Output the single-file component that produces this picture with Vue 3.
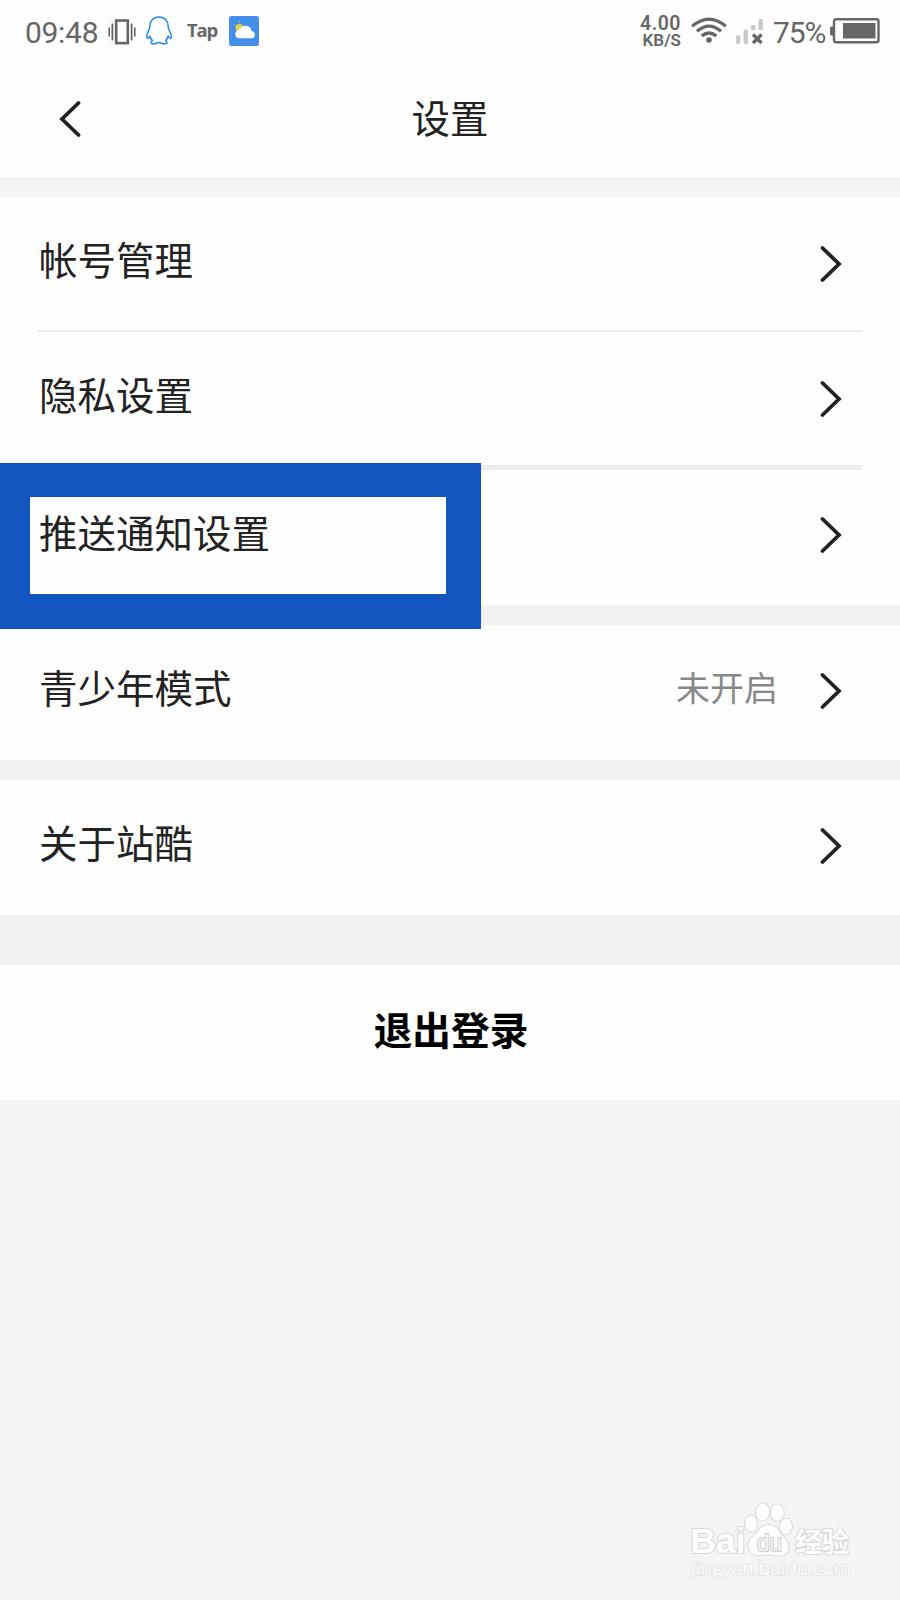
<script setup>
const groups = [
  [
    { label: '帐号管理', size: 'first' },
    { label: '隐私设置', size: 'second' },
    { label: '推送通知设置', size: 'third', marked: true },
  ],
  [{ label: '青少年模式', value: '未开启' }],
  [{ label: '关于站酷' }],
]
</script>

<template>
  <div class="screen">
    <div class="status">
      <span class="time">09:48</span>
      <svg class="vibrate" width="28" height="26" viewBox="0 0 28 26" fill="none" stroke="#666">
        <rect x="8.2" y="1.5" width="11.6" height="22.6" stroke-width="2.6" />
        <path d="M4.4 4.5v17M23.6 4.5v17" stroke-width="1.8" />
        <path d="M1.2 8.5v9M26.8 8.5v9" stroke-width="1.6" />
      </svg>
      <svg class="qq" width="26" height="29" viewBox="0 0 26 29" fill="none" stroke="#2488e6" stroke-width="1.5" stroke-linejoin="round">
        <path d="M13 1C7 1 3.800 5.300 3.800 10.200C3.800 13 2.500 14.500 1.500 17.200C.6 19.700.7 22 1.500 22.400C2.300 22.700 3.300 20.800 3.900 20C4.300 22 5.200 23.500 6.500 24.600C4.500 25.500 4.200 27.700 6.800 27.800C9 28 11 27.600 12 26.600H14C15 27.600 17 28 19.200 27.800C21.800 27.700 21.500 25.500 19.500 24.600C20.800 23.500 21.700 22 22.100 20C22.700 20.800 23.700 22.700 24.500 22.400C25.300 22 25.400 19.700 24.500 17.200C23.500 14.500 22.200 13 22.200 10.200C22.200 5.300 19 1 13 1Z" />
      </svg>
      <span class="tap">Tap</span>
      <svg class="weather" width="30" height="30" viewBox="0 0 30 30">
        <rect width="30" height="30" rx="2.500" fill="#438ee8" />
        <circle cx="10.500" cy="12" r="4" fill="#e5d24a" />
        <path d="M5 8.500l1.500 1M10.500 4.700v1.600" stroke="#b9c66c" stroke-width="1" />
        <path d="M10 22.200a4 4 0 0 1-.6-7.900a3.700 3.700 0 0 1 3-2.300a5.600 5.600 0 0 1 10 3.100a3.600 3.600 0 0 1 .6 7.100Z" fill="#fff" />
      </svg>
      <span class="spacer"></span>
      <span class="speed"><span>4.00</span><span class="unit">KB/S</span></span>
      <svg class="wifi" width="36" height="27" viewBox="0 0 36 27" fill="none" stroke="#666" stroke-width="3.300">
        <path d="M1.200 9.300Q18-5.100 34.800 9.300M5.900 14.300Q18 3.900 30.100 14.300M10.700 19Q18 13 25.300 19" />
        <circle cx="18" cy="23" r="2.800" fill="#666" stroke="none" />
      </svg>
      <svg class="signal" width="28" height="27" viewBox="0 0 28 27">
        <g fill="#c9c9c9">
          <rect x="0" y="17" width="4.400" height="9" rx="1.800" />
          <rect x="7.500" y="11.500" width="4.400" height="14.500" rx="1.500" />
          <rect x="15" y="7" width="4.400" height="5" rx="1.500" />
          <rect x="22.500" y="1" width="4.400" height="11" rx="1.500" />
        </g>
        <path d="M17 16.500l8.500 8.500M25.500 16.500l-8.500 8.500" stroke="#666" stroke-width="3.300" />
      </svg>
      <span class="percent">75%</span>
      <svg class="battery" width="50" height="26" viewBox="0 0 50 26">
        <rect x="0" y="8.500" width="4" height="9" rx="1.500" fill="#666" />
        <rect x="4" y="1.300" width="44.500" height="23" rx="2" fill="none" stroke="#666" stroke-width="2.400" />
        <rect x="13" y="5" width="32.500" height="15.500" fill="#666" />
      </svg>
    </div>

    <div class="header">
      <svg class="back" width="22" height="38" viewBox="0 0 22 38">
        <path d="M19.500 3L3 19L19.500 35" fill="none" stroke="#222" stroke-width="3.800" stroke-linecap="round" />
      </svg>
      <h1>设置</h1>
    </div>

    <section v-for="(group, i) in groups" :key="i" class="group">
      <div v-for="row in group" :key="row.label" class="row" :class="row.size">
        <div v-if="row.marked" class="marker"></div>
        <span class="label">{{ row.label }}</span>
        <span v-if="row.value" class="value">{{ row.value }}</span>
        <svg class="chevron" width="22" height="38" viewBox="0 0 22 38">
          <path d="M2.500 3L19 19L2.500 35" fill="none" stroke="#222" stroke-width="3.800" stroke-linecap="round" />
        </svg>
      </div>
    </section>

    <button class="logout">退出登录</button>

    <div class="rest">
      <svg class="watermark" width="170" height="84" viewBox="0 0 170 84">
        <g fill="#fdfdfd" stroke="#d9d9d9" stroke-width="2" paint-order="stroke">
          <text x="4.500" y="55" font-size="35.500" font-weight="700" textLength="55">Bai</text>
          <text x="109" y="53.500" font-size="27" font-weight="700" class="cjk" textLength="54">经验</text>
          <ellipse cx="65" cy="25.500" rx="6" ry="8" />
          <ellipse cx="76.700" cy="14" rx="6.500" ry="8.700" />
          <ellipse cx="91.300" cy="14.700" rx="6.500" ry="8.300" />
          <ellipse cx="100" cy="28.500" rx="6" ry="7.700" />
          <path d="M82.500 27C74 27 73 34 67 39C60 44 61 55 70 57C75 58 78 56 83 56.500C88 57 91 58.500 97 57C104 55 104 46 99 41C93 35 92 27 82.500 27Z" />
          <text x="71" y="53" font-size="24" textLength="25" lengthAdjust="spacingAndGlyphs" fill="#f1f1f1" stroke="#cfcfcf">du</text>
          <text x="5" y="77" font-size="19" textLength="160" stroke="#e2e2e2" stroke-width="1.600" class="url">jingyan.baidu.com</text>
        </g>
      </svg>
    </div>
  </div>
</template>

<style>
body {
  margin: 0;
  background: #f4f4f4;
}
</style>

<style scoped>
.screen {
  width: 900px;
  height: 1600px;
  display: flex;
  flex-direction: column;
  overflow: hidden;
  background: #f4f4f4;
  color: #222;
  font-family: "Noto Sans CJK SC", sans-serif;
}
.status {
  flex: none;
  height: 66px;
  box-sizing: border-box;
  padding: 0 20px 0 25px;
  display: flex;
  align-items: center;
  background: #fefefe;
  color: #666;
  font-family: Roboto, sans-serif;
}
.time,
.percent {
  font-size: 30px;
  font-weight: 400;
  line-height: 36px;
}
.time {
  width: 83px;
  letter-spacing: -0.3px;
  white-space: nowrap;
}
.vibrate { margin-top: -3px; }
.qq { margin: -5px 0 0 10px; }
.tap {
  width: 38px;
  margin: -7px 0 0 15px;
  font: 700 18.5px/24px "Open Sans", sans-serif;
  letter-spacing: -1.2px;
}
.weather { margin: -5px 0 0 4px; }
.spacer { flex: 1; }
.speed {
  display: flex;
  flex-direction: column;
  align-items: flex-end;
  margin: -3px 10px 0 0;
  font-size: 19.5px;
  font-weight: 600;
  line-height: 17px;
  letter-spacing: 0.5px;
}
.unit {
  font-size: 17px;
  letter-spacing: 0;
}
.wifi { margin: -5px 9px 0 0; }
.signal { margin: -3px 9px 0 0; }
.percent {
  width: 57px;
  letter-spacing: -1.1px;
}
.battery { margin-top: -4px; }
.header {
  flex: none;
  height: 111px;
  display: grid;
  grid-template-columns: 100px 1fr 100px;
  align-items: start;
  background: #fefefe;
}
.back { margin: 34px 0 0 59px; }
h1 {
  margin: 22px 0 0;
  text-align: center;
  font-size: 38.5px;
  font-weight: 400;
  line-height: 56px;
}
.group {
  flex: none;
  margin-top: 20px;
  background: #fefefe;
  box-shadow: 0 -20px #f1f1f1;
}
.group:first-of-type { box-shadow: 0 -20px #f4f4f4; }
.row {
  position: relative;
  height: 135px;
  box-sizing: border-box;
  display: flex;
  align-items: center;
  padding: 0 58px 3px 39px;
}
.row.first,
.row.second {
  margin: 0 38px 0 37px;
  padding: 0 20px 0 2px;
}
.row.first { border-bottom: 2px solid #ececec; }
.row.second {
  height: 138px;
  border-bottom: 5px solid #ececec;
}
.row.third { padding-bottom: 5px; }
.label {
  position: relative;
  flex: 1;
  padding-bottom: 11px;
  font-size: 38.5px;
  line-height: 56px;
}
.row.third .label {
  padding-bottom: 9px;
  z-index: 2;
}
.value {
  margin-right: 42px;
  padding-bottom: 9px;
  color: #888;
  font-size: 34px;
  line-height: 50px;
}
.chevron { flex: none; }
.marker {
  position: absolute;
  left: 0;
  top: -7px;
  width: 481px;
  height: 166px;
  box-sizing: border-box;
  border: solid #1456bf;
  border-width: 34px 35px 35px 30px;
  z-index: 1;
}
.logout {
  flex: none;
  height: 135px;
  margin-top: 50px;
  padding: 0 0 9px 2px;
  border: 0;
  background: #fefefe;
  box-shadow: 0 -50px #f1f1f1;
  color: #000;
  font-family: inherit;
  font-size: 38.7px;
  font-weight: 700;
}
.rest {
  flex: 1;
  display: flex;
  justify-content: flex-end;
  align-items: flex-end;
}
.watermark {
  margin: 0 44px 18px 0;
  font-family: "Liberation Sans", sans-serif;
}
.cjk { font-family: "Noto Sans CJK SC", sans-serif; }
.url { font-family: "Open Sans", sans-serif; }
</style>
